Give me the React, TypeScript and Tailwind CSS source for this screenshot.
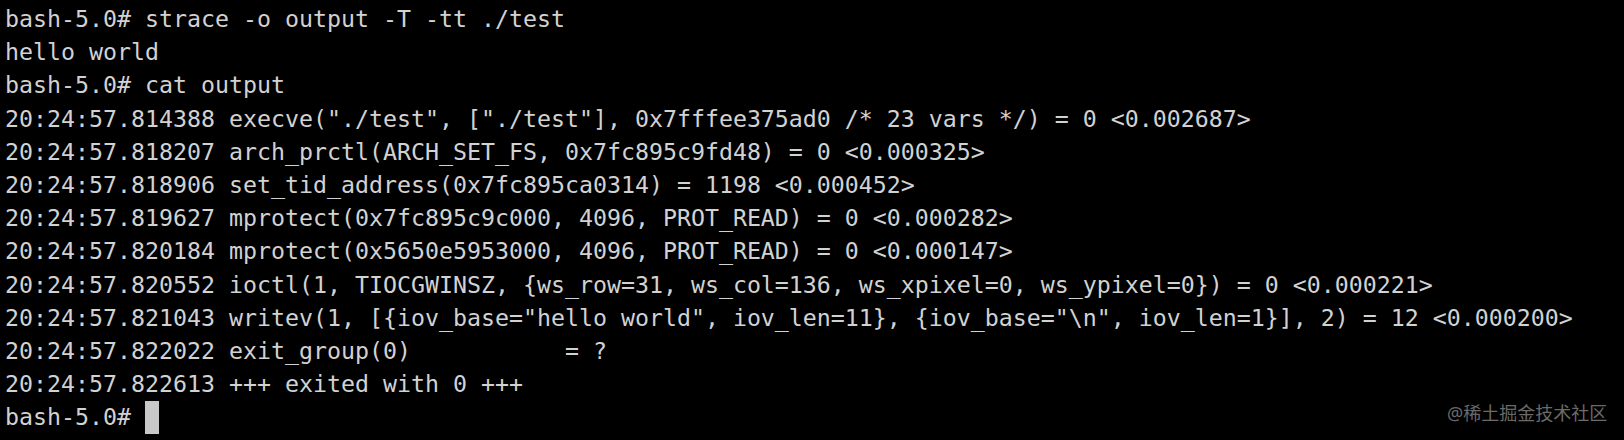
import React from "react";

const lines: string[] = [
  "bash-5.0# strace -o output -T -tt ./test",
  "hello world",
  "bash-5.0# cat output",
  '20:24:57.814388 execve("./test", ["./test"], 0x7fffee375ad0 /* 23 vars */) = 0 <0.002687>',
  "20:24:57.818207 arch_prctl(ARCH_SET_FS, 0x7fc895c9fd48) = 0 <0.000325>",
  "20:24:57.818906 set_tid_address(0x7fc895ca0314) = 1198 <0.000452>",
  "20:24:57.819627 mprotect(0x7fc895c9c000, 4096, PROT_READ) = 0 <0.000282>",
  "20:24:57.820184 mprotect(0x5650e5953000, 4096, PROT_READ) = 0 <0.000147>",
  "20:24:57.820552 ioctl(1, TIOCGWINSZ, {ws_row=31, ws_col=136, ws_xpixel=0, ws_ypixel=0}) = 0 <0.000221>",
  '20:24:57.821043 writev(1, [{iov_base="hello world", iov_len=11}, {iov_base="\\n", iov_len=1}], 2) = 12 <0.000200>',
  "20:24:57.822022 exit_group(0)           = ?",
  "20:24:57.822613 +++ exited with 0 +++",
];

export default function App() {
  return (
    <div className="relative w-[1624px] h-[440px] bg-black overflow-hidden">
      <div
        className="pl-[5px] pt-[2px] text-[23.25px] leading-[33.2px] text-[#d2d2d2] whitespace-pre"
        style={{ fontFamily: '"DejaVu Sans Mono", "Liberation Mono", monospace' }}
      >
        {lines.map((l, i) => (
          <div key={i}>{l}</div>
        ))}
        <div className="flex items-center">
          <span>bash-5.0# </span>
          <span className="inline-block w-[14px] h-[33px] bg-[#c8c8c8]" />
        </div>
      </div>
      <div
        className="absolute left-[1447px] top-[401px] text-[18px] leading-[24px] text-[#6a6a6a] whitespace-nowrap"
        style={{ fontFamily: '"Noto Sans", "Noto Sans CJK SC", sans-serif' }}
      >
        @稀土掘金技术社区
      </div>
    </div>
  );
}
